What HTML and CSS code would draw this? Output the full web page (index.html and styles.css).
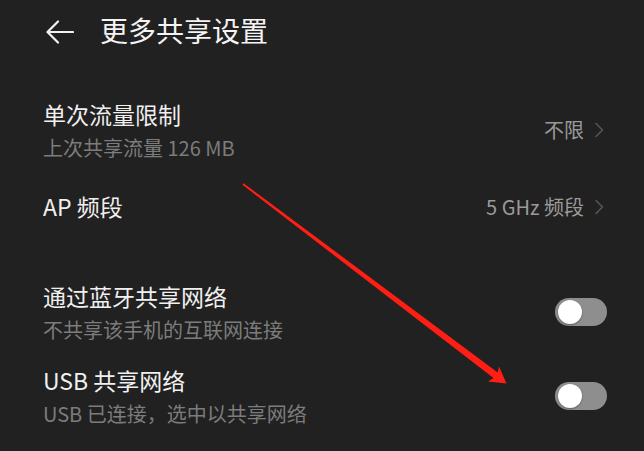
FILE: index.html
```html
<!DOCTYPE html>
<html lang="zh-CN">
<head>
<meta charset="utf-8">
<title>更多共享设置</title>
<link rel="stylesheet" href="styles.css">
</head>
<body>
<div class="page">
  <header class="header">
    <svg class="back" width="28" height="26" viewBox="0 0 28 26">
      <path d="M27 13 H2 M12 2.5 L1.5 13 L12 23.5" fill="none" stroke="#f2f2f2" stroke-width="2.2" stroke-linecap="round" stroke-linejoin="round"/>
    </svg>
    <h1 class="title">更多共享设置</h1>
  </header>

  <section class="group">
    <div class="row row-1">
      <div class="texts">
        <div class="primary">单次流量限制</div>
        <div class="secondary">上次共享流量 126 MB</div>
      </div>
      <div class="value">不限<svg class="chev" width="10" height="16" viewBox="0 0 10 16"><path d="M2 1.5 L8.5 8 L2 14.5" fill="none" stroke="#565656" stroke-width="1.6" stroke-linecap="round" stroke-linejoin="round"/></svg></div>
    </div>
    <div class="row row-2">
      <div class="texts">
        <div class="primary">AP 频段</div>
      </div>
      <div class="value">5 GHz 频段<svg class="chev" width="10" height="16" viewBox="0 0 10 16"><path d="M2 1.5 L8.5 8 L2 14.5" fill="none" stroke="#565656" stroke-width="1.6" stroke-linecap="round" stroke-linejoin="round"/></svg></div>
    </div>
  </section>

  <section class="group group-2">
    <div class="row row-3">
      <div class="texts">
        <div class="primary">通过蓝牙共享网络</div>
        <div class="secondary">不共享该手机的互联网连接</div>
      </div>
      <div class="toggle"><span class="knob"></span></div>
    </div>
    <div class="row row-3">
      <div class="texts">
        <div class="primary">USB 共享网络</div>
        <div class="secondary">USB 已连接，选中以共享网络</div>
      </div>
      <div class="toggle"><span class="knob"></span></div>
    </div>
  </section>

  <svg class="annot" width="644" height="451" viewBox="0 0 644 451">
    <polygon points="242.4,184.8 493.5,378 488,381.5 506.5,383.5 499,366.5 497.7,372.4 243.6,183.2" fill="#ff1e14"/>
  </svg>
</div>
</body>
</html>
```

FILE: styles.css
```css
html, body {
  margin: 0;
  padding: 0;
  background: #212121;
}
body {
  font-family: "Noto Sans CJK SC", "Noto Sans", sans-serif;
  color: #f0f0f0;
  width: 644px;
  height: 451px;
  overflow: hidden;
}
.page {
  position: relative;
  width: 644px;
  height: 451px;
}
.header {
  height: 62px;
  display: flex;
  align-items: center;
  padding-left: 46px;
}
.back {
  display: block;
  margin-top: 1px;
}
.title {
  margin: -2px 0 0 26px;
  font-size: 28px;
  font-weight: 400;
  line-height: 36px;
  color: #f4f4f4;
}
.group {
  padding-top: 31px;
}
.group-2 {
  padding-top: 23px;
}
.row {
  display: flex;
  align-items: center;
  justify-content: space-between;
  padding: 0 37px 0 43px;
}
.row-1 { height: 74px; }
.row-2 { height: 80px; }
.row-3 { height: 84px; }
.texts {
  display: flex;
  flex-direction: column;
}
.primary {
  font-size: 23px;
  line-height: 30px;
  color: #f0f0f0;
}
.row-2 .primary {
  margin-top: -2px;
}
.secondary {
  font-size: 20px;
  line-height: 26px;
  margin-top: 6px;
  color: #7c7c7c;
}
.value {
  display: flex;
  align-items: center;
  font-size: 20px;
  line-height: 26px;
  color: #9a9a9a;
}
.chev {
  display: block;
  margin-left: 10px;
  margin-right: 3px;
}
.toggle {
  width: 52px;
  height: 28px;
  border-radius: 14px;
  background: #8e8e8e;
  display: flex;
  align-items: center;
  padding-left: 3px;
  box-sizing: border-box;
}
.knob {
  width: 24px;
  height: 24px;
  border-radius: 50%;
  background: #ffffff;
  box-shadow: 0 1px 2px rgba(0, 0, 0, 0.35);
}
.annot {
  position: absolute;
  left: 0;
  top: 0;
  pointer-events: none;
}
```
